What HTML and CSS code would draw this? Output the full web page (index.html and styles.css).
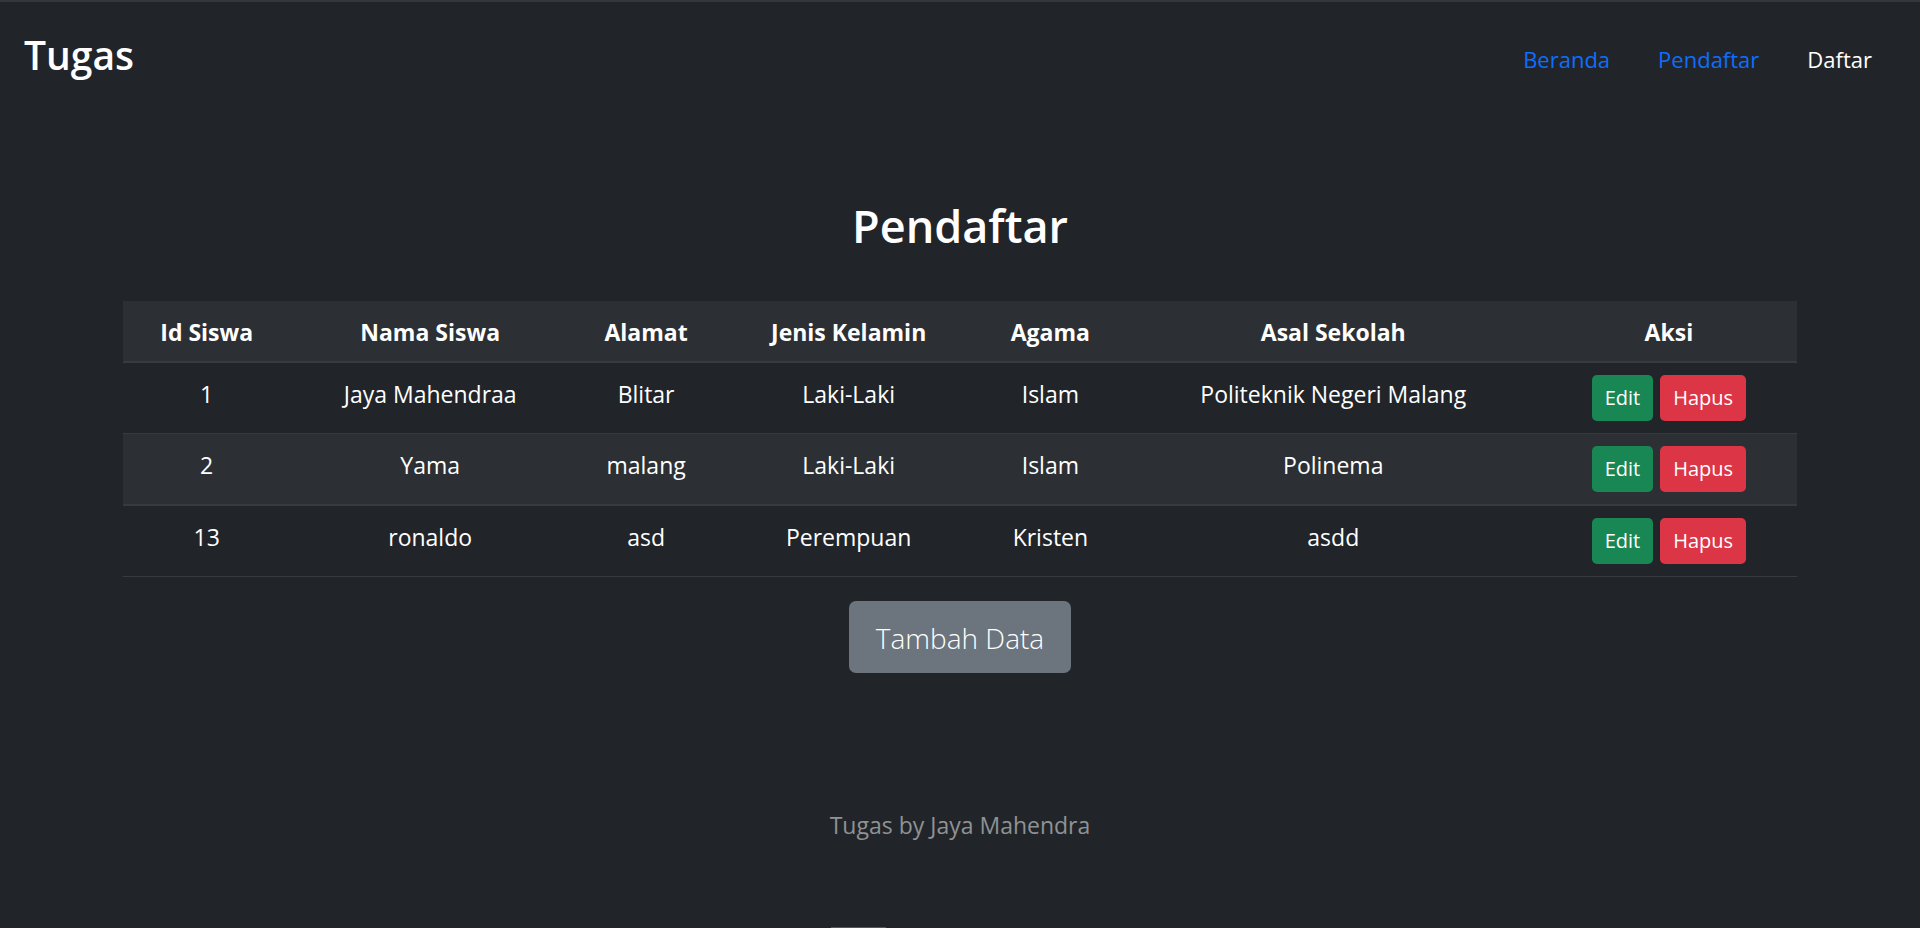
FILE: index.html
```html
<!DOCTYPE html>
<html lang="id">
<head>
<meta charset="utf-8">
<title>Tugas - Pendaftar</title>
<link rel="stylesheet" href="styles.css">
</head>
<body class="page">
<header class="navbar">
  <h3 class="brand">Tugas</h3>
  <nav class="nav">
    <a class="nav-link" href="#beranda">Beranda</a>
    <a class="nav-link" href="#pendaftar">Pendaftar</a>
    <a class="nav-link nav-link-plain" href="#daftar">Daftar</a>
  </nav>
</header>
<main class="container">
  <h1 class="title">Pendaftar</h1>
  <table class="table">
    <colgroup>
      <col class="col-id"><col class="col-name"><col class="col-address"><col class="col-gender"><col class="col-religion"><col class="col-school"><col class="col-action">
    </colgroup>
    <thead>
      <tr><th>Id Siswa</th><th>Nama Siswa</th><th>Alamat</th><th>Jenis Kelamin</th><th>Agama</th><th>Asal Sekolah</th><th>Aksi</th></tr>
    </thead>
    <tbody>
      <tr><td>1</td><td>Jaya Mahendraa</td><td>Blitar</td><td>Laki-Laki</td><td>Islam</td><td>Politeknik Negeri Malang</td>
        <td><div class="actions"><button class="btn btn-sm btn-success" type="button">Edit</button><button class="btn btn-sm btn-danger" type="button">Hapus</button></div></td></tr>
      <tr><td>2</td><td>Yama</td><td>malang</td><td>Laki-Laki</td><td>Islam</td><td>Polinema</td>
        <td><div class="actions"><button class="btn btn-sm btn-success" type="button">Edit</button><button class="btn btn-sm btn-danger" type="button">Hapus</button></div></td></tr>
      <tr><td>13</td><td>ronaldo</td><td>asd</td><td>Perempuan</td><td>Kristen</td><td>asdd</td>
        <td><div class="actions"><button class="btn btn-sm btn-success" type="button">Edit</button><button class="btn btn-sm btn-danger" type="button">Hapus</button></div></td></tr>
    </tbody>
  </table>
  <button class="btn btn-lg btn-secondary" type="button">Tambah Data</button>
</main>
<footer class="footer">Tugas by Jaya Mahendra</footer>
<div class="handle"></div>
</body>
</html>
```
FILE: styles.css
```css
*, *::before, *::after { box-sizing: border-box; }

.page {
  margin: 0;
  min-height: 100vh;
  display: flex;
  flex-direction: column;
  position: relative;
  border-top: 2px solid #36373a;
  background: #212529;
  color: #fff;
  font-family: "Open Sans", "Noto Sans", sans-serif;
  font-size: 23px;
  line-height: 36px;
}

.navbar {
  display: flex;
  justify-content: space-between;
  align-items: center;
  padding: 19px 24px 24px;
}

.brand {
  margin: 0;
  font-size: 39px;
  font-weight: 600;
  line-height: 60px;
}

.nav { display: flex; padding-top: 8px; }

.nav-link {
  padding: 12px 24px;
  color: #0d6efd;
  font-size: 22px;
  text-decoration: none;
}

.nav-link-plain { color: #fff; }

.container {
  width: 100%;
  max-width: 1710px;
  margin: 77px auto 0;
  padding: 0 18px;
  text-align: center;
}

.title {
  margin: 0 0 39px;
  font-size: 45px;
  font-weight: 600;
  line-height: 72px;
}

.table {
  width: 100%;
  margin: 0 0 24px;
  table-layout: fixed;
  border-collapse: separate;
  border-spacing: 0;
}

.col-id { width: 10%; }
.col-name { width: 16.7%; }
.col-address { width: 9.1%; }
.col-gender { width: 15.1%; }
.col-religion { width: 9%; }
.col-school { width: 24.8%; }
.col-action { width: 15.3%; }

.table th, .table td {
  padding: 13px 12px 11px;
  vertical-align: top;
  border-bottom: 1px solid #373b3e;
}

.table td:last-child { padding: 12px; }

.table th { font-weight: 700; border-bottom-width: 2px; }
.table th, .table tr:nth-child(even) td { background: #2c3034; }
.table tr:nth-child(even) td { border-bottom-width: 2px; }

.actions { display: flex; justify-content: center; gap: 7px; }

.btn {
  border: 1px solid transparent;
  color: #fff;
  font-family: inherit;
  cursor: pointer;
}

.btn-sm {
  padding: 7px 12px;
  font-size: 20px;
  line-height: 30px;
  border-radius: 5px;
}

.btn-lg {
  padding: 14px 26px 12px;
  font-size: 28px;
  font-weight: 300;
  line-height: 44px;
  border-radius: 7px;
}

.btn-success { background: #198754; }
.btn-danger { background: #dc3545; }
.btn-secondary { background: #6c757d; }

.footer {
  margin: 134px 0 0;
  text-align: center;
  color: #909294;
}

.handle {
  position: absolute;
  left: 831px;
  bottom: 0;
  width: 55px;
  height: 1px;
  background: #55585a;
}
```
